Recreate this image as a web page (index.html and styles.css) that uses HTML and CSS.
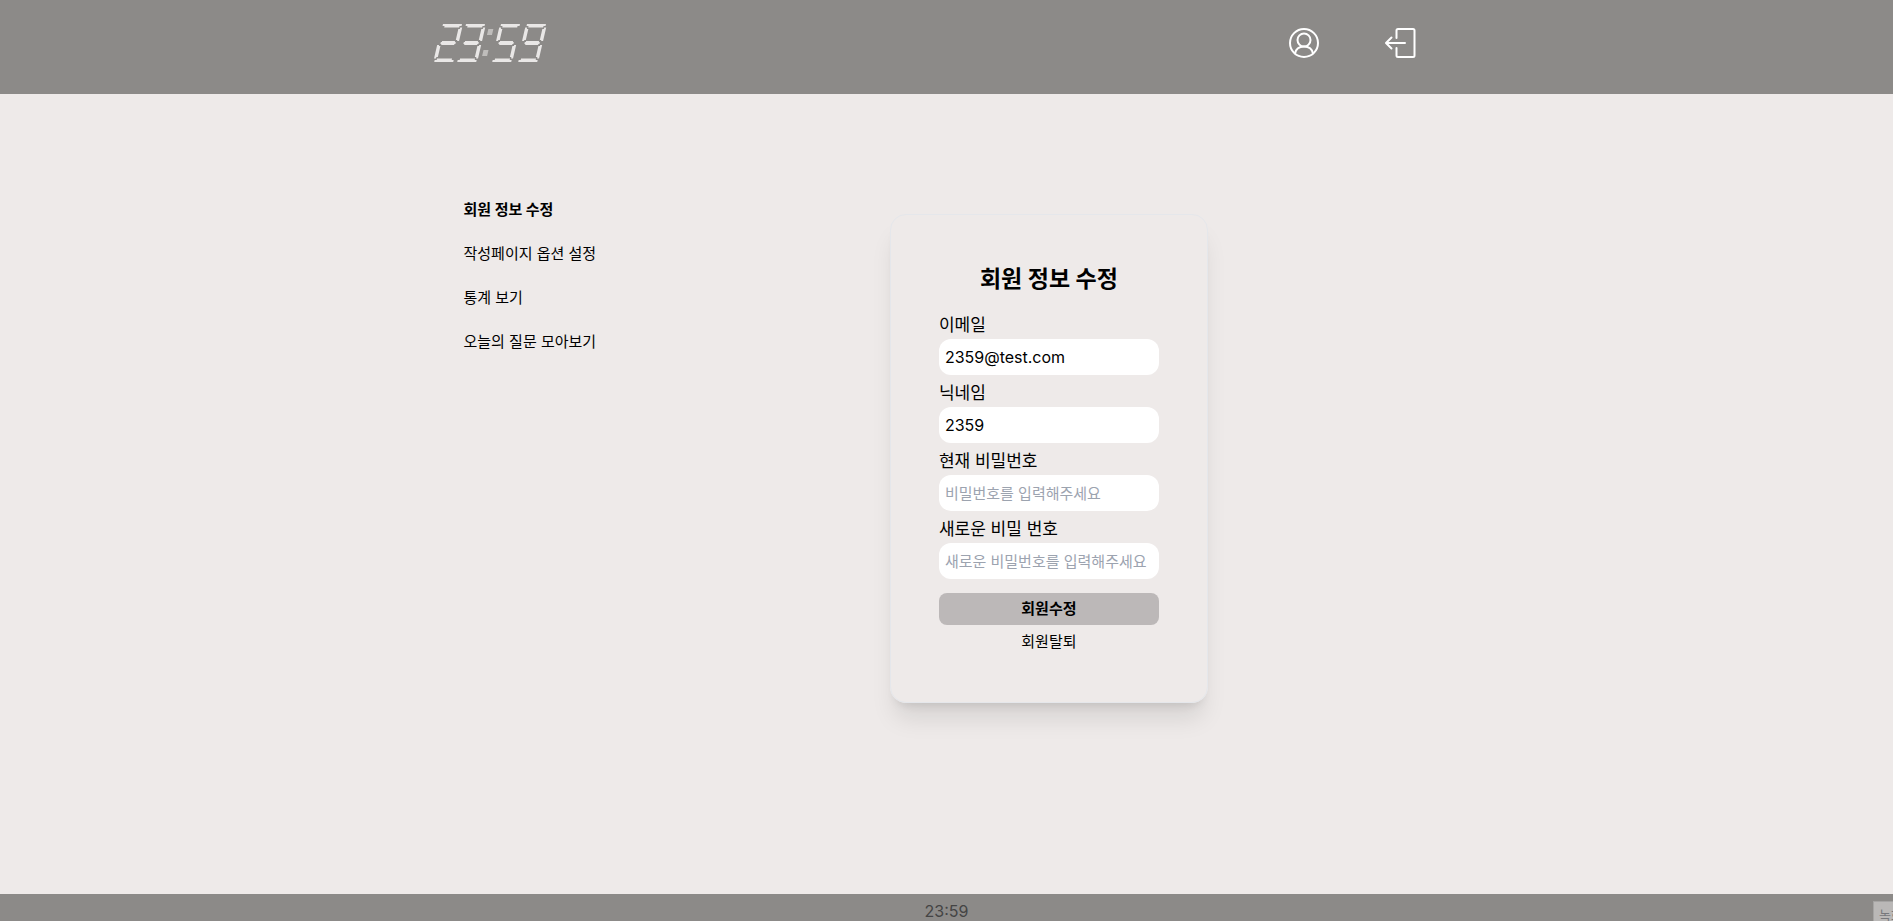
FILE: index.html
```html
<!DOCTYPE html>
<html lang="ko">
<head>
<meta charset="utf-8">
<meta name="viewport" content="width=device-width, initial-scale=1">
<title>회원 정보 수정</title>
<link rel="stylesheet" href="styles.css">
</head>
<body>
<header class="header">
  <div class="container header-inner">
    <a class="logo" href="#" aria-label="23:59">
      <svg width="114" height="40" viewBox="0 0 114 40" aria-hidden="true">
        <defs>
          <g id="seg-top"><path d="M1 1H20M3 2.500H18"/></g>
          <g id="seg-mid"><path d="M4 18H17M3 19H18M4 20H17"/></g>
          <g id="seg-low"><path d="M3 35.500H18M1 37H20"/></g>
          <g id="seg-left"><path d="M1 3.500V17M2.500 5V16"/></g>
          <g id="seg-right"><path d="M18.500 5V16M20 3.500V17"/></g>
          <g id="seg-left2"><path d="M1 21V34.500M2.500 22V33"/></g>
          <g id="seg-right2"><path d="M18.500 22V33M20 21V34.500"/></g>
        </defs>
        <g class="segments" transform="translate(7 1) skewX(-13)">
          <g><use href="#seg-top"/><use href="#seg-right"/><use href="#seg-mid"/><use href="#seg-left2"/><use href="#seg-low"/></g>
          <g transform="translate(23)"><use href="#seg-top"/><use href="#seg-right"/><use href="#seg-mid"/><use href="#seg-right2"/><use href="#seg-low"/></g>
          <g transform="translate(58)"><use href="#seg-top"/><use href="#seg-left"/><use href="#seg-mid"/><use href="#seg-right2"/><use href="#seg-low"/></g>
          <g transform="translate(84)"><use href="#seg-top"/><use href="#seg-left"/><use href="#seg-right"/><use href="#seg-mid"/><use href="#seg-right2"/><use href="#seg-low"/></g>
          <path class="dots" d="M50 5V11M50 26V32"/>
        </g>
      </svg>
    </a>
    <nav class="actions" aria-label="계정">
      <a href="#" aria-label="마이페이지">
        <svg class="icon" width="32" height="32" viewBox="0 0 32 32"><circle cx="16" cy="16" r="14"/><circle cx="16" cy="13" r="6.500"/><path d="M7 26.500C8 21.500 11.500 19.500 16 19.500S24 21.500 25 26.500"/></svg>
      </a>
      <a href="#" aria-label="로그아웃">
        <svg class="icon" width="32" height="32" viewBox="0 0 32 32"><path d="M12.500 11V3.500Q12.500 2 14 2H29Q30.500 2 30.500 3.500V28.500Q30.500 30 29 30H14Q12.500 30 12.500 28.500V21M21 16H2.500M7.500 10.500L2 16L7.500 21.500"/></svg>
      </a>
    </nav>
  </div>
</header>

<div class="container page">
  <nav class="sidebar" aria-label="마이페이지 메뉴">
    <a class="current" href="#" aria-current="page">회원 정보 수정</a>
    <a href="#">작성페이지 옵션 설정</a>
    <a href="#">통계 보기</a>
    <a href="#">오늘의 질문 모아보기</a>
  </nav>
  <main class="content">
    <form class="card">
      <h1>회원 정보 수정</h1>
      <div class="field"><label for="email">이메일</label><input id="email" type="email" value="2359@test.com"></div>
      <div class="field"><label for="nickname">닉네임</label><input id="nickname" type="text" value="2359"></div>
      <div class="field"><label for="password">현재 비밀번호</label><input id="password" type="password" placeholder="비밀번호를 입력해주세요"></div>
      <div class="field"><label for="new-password">새로운 비밀 번호</label><input id="new-password" type="password" placeholder="새로운 비밀번호를 입력해주세요"></div>
      <button class="submit" type="button">회원수정</button>
      <button class="withdraw" type="button">회원탈퇴</button>
    </form>
  </main>
</div>

<footer class="footer">
  <span>23:59</span>
  <button class="recorder" type="button">녹화</button>
</footer>
</body>
</html>
```

FILE: styles.css
```css
* {
  box-sizing: border-box;
}

body {
  display: flex;
  flex-direction: column;
  min-height: 100vh;
  margin: 0;
  background: #eeeae9;
  color: #000;
  font: 15px/24px Inter, "Noto Sans CJK KR", sans-serif;
}

a {
  color: inherit;
  text-decoration: none;
}

svg {
  display: block;
  overflow: visible;
}

.container {
  width: 100%;
  max-width: 1024px;
  margin: 0 auto;
}

.header {
  background: #8c8a88;
}

.header-inner {
  display: flex;
  justify-content: space-between;
  height: 94px;
  padding: 23px 43px 0 0;
}

.segments {
  fill: none;
  stroke: #e9e7e6;
  stroke-width: 2;
}

.segments .dots {
  stroke: #bfbdbb;
  stroke-width: 5;
}

.actions {
  display: flex;
  gap: 64px;
  padding-top: 4px;
}

.icon {
  fill: none;
  stroke: #fff;
  stroke-width: 2;
  stroke-linecap: round;
  stroke-linejoin: round;
}

.page {
  display: grid;
  grid-template-columns: 1fr 4fr;
  flex: 1;
}

.sidebar {
  display: flex;
  flex-direction: column;
  align-items: flex-start;
  gap: 20px;
  padding: 104px 0 0 29px;
  white-space: nowrap;
}

.sidebar .current {
  font-weight: 700;
}

.content {
  display: flex;
  justify-content: center;
  align-items: flex-start;
  padding: 120px 0;
}

.card {
  display: flex;
  flex-direction: column;
  gap: 4px;
  padding: 48px;
  border: 1px solid #e5e7eb;
  border-radius: 16px;
  box-shadow: 0 20px 25px -5px rgb(0 0 0 / 10%), 0 8px 10px -6px rgb(0 0 0 / 10%);
}

.card h1 {
  margin: 0 0 12px;
  font-size: 23px;
  line-height: 32px;
  font-weight: 700;
  text-align: center;
}

.field {
  display: flex;
  flex-direction: column;
}

.field label {
  font-size: 17px;
  line-height: 28px;
}

.field input {
  width: 220px;
  height: 36px;
  padding: 0 6px;
  border: 0;
  border-radius: 12px;
  background: #fff;
  color: #000;
  font: inherit;
  font-size: 16px;
}

.field input::placeholder {
  color: #9ca3af;
  font-size: 15px;
  opacity: 1;
}

.submit,
.withdraw {
  padding: 0;
  border: 0;
  background: none;
  color: #000;
  font: inherit;
}

.submit {
  height: 32px;
  margin-top: 10px;
  border-radius: 8px;
  background: #bcb8b8;
  font-weight: 700;
}

.withdraw {
  height: 25px;
}

.footer {
  position: relative;
  height: 27px;
  padding-top: 5px;
  overflow: hidden;
  background: #8c8a88;
  color: #444;
  font-size: 16px;
  text-align: center;
}

.recorder {
  position: absolute;
  top: 7px;
  left: calc(100% - 20px);
  width: 40px;
  height: 28px;
  padding: 0 0 0 5px;
  border: 1px solid #a5a4a3;
  background: #bab8b7;
  color: #77787c;
  font: 13px/24px "Noto Sans CJK KR", sans-serif;
  text-align: left;
}
```
